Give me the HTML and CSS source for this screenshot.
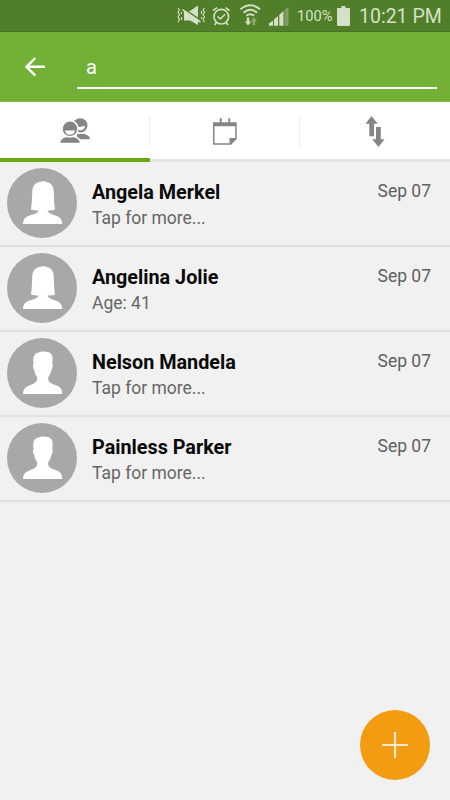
FILE: index.html
```html
<!DOCTYPE html>
<html lang="en">

<head>
    <meta charset="UTF-8">
    <meta name="viewport" content="width=device-width, initial-scale=1.0">
    <title>Contacts</title>
    <link rel="stylesheet" href="styles.css">
</head>

<body>
    <!-- shared avatar shapes -->
    <svg class="symbols" width="0" height="0">
        <symbol id="avatar-woman" viewBox="0 0 70 70">
            <path d="M24 41.500 C25 34 25 29 25.300 23 C25.700 17 29.500 13.500 35 13.500 C36.500 12.800 39 13.300 40 14.200 C44.500 14.800 46.700 18.500 46.800 24 C47 31 47 36 48 41.500 C45.500 42.700 42.500 42.300 40.500 42.500 C41 45.500 46 46.500 50 48 C53.500 49.500 55 52 55.300 56 L16 56 C16.300 51.500 18 49.300 22 47.800 C26 46.400 30.500 45.500 31.500 42.500 C29 42.300 26 42.500 24 41.500Z" />
        </symbol>
        <symbol id="avatar-man" viewBox="0 0 70 70">
            <path d="M30 39 C28.300 36.500 27.600 34.500 27.300 32 C26 30.500 25.500 26.800 26.700 25.800 C25.300 19 27.500 15.300 31 14.700 C35 12.700 41 13.300 43.500 15.300 C46 17.500 46 21.500 45.200 25.800 C46.300 27 45.600 31 44.300 32 C44 34.500 43.200 36.700 41.300 39 C40.500 43 42.500 45 47.500 46.700 C53 48.500 55 50 55.300 56 L16 56 C16.300 50.500 18.500 48.700 23.500 46.900 C29 45 31 43 30 39Z" />
        </symbol>
    </svg>

    <div class="screen">
        <div class="status-bar">
            <svg class="status-icons" width="112" height="31" viewBox="177 0 112 31">
                <!-- mute / vibrate -->
                <path d="M184 11 H190 L198 5.500 V25 L190 20.500 H184Z" />
                <path class="cut" d="M183 8.300 L201 20.300" />
                <path class="line" d="M182.500 9.700 L200.500 22" />
                <path class="wave" d="M178 8 l1.500 2 -1.500 2.300 1.500 2.300 -1.500 2.300 1.500 2.300 -1.500 3 M204.500 8 l-1.500 2 1.500 2.300 -1.500 2.300 1.500 2.300 -1.500 2.300 1.500 3" />
                <path class="wave" d="M181.500 12 v2 M181.500 17 v3 M201.500 11 v3 M201.500 17 v2" />
                <!-- alarm -->
                <circle class="line" cx="221.300" cy="16.700" r="7.300" />
                <path class="line" d="M217.500 16.500 L220.300 19 L225 14.300 M213 10.700 L217 7.700 M229.600 10.700 L225.600 7.700 M216.500 22.500 L214.500 25 M226 22.500 L228 25" />
                <!-- wifi -->
                <path class="line thick" d="M240.500 9.300 Q250.300 1.300 260 9.300 M243.500 12.700 Q250.300 7 257 12.700 M246.300 15.800 Q250.300 12.800 254.200 15.800" />
                <path d="M246.800 17.500 h2.500 v4 h2 l-3.200 4 -3.200 -4 h1.900Z" />
                <path class="dim" d="M252.600 25.300 h2.500 v-4 h2 l-3.200 -4 -3.200 4 h1.900Z" />
                <!-- signal -->
                <path d="M269 25.700 V23.500 L273 20.500 V25.700Z M274 25.700 V19.500 L278 16 V25.700Z M279.300 25.700 V14.800 L283.500 11 V25.700Z" />
                <path class="faint" d="M284.500 25.700 V10 L288.500 6.500 V25.700Z" />
            </svg>
            <span class="battery-text">100%</span>
            <svg class="battery" width="13" height="20" viewBox="0 0 13 20">
                <path d="M4.500 0 H8.500 V2 H12 Q13 2 13 3 V19 Q13 20 12 20 H1 Q0 20 0 19 V3 Q0 2 1 2 H4.500Z" />
            </svg>
            <span class="clock">10:21 PM</span>
        </div>

        <div class="app-bar">
            <svg class="back" width="20" height="20" viewBox="0 0 20 20">
                <path d="M10.300 1 L1.500 9.800 L10.300 18.600 M1.500 9.800 H20" />
            </svg>
            <div class="search">a</div>
        </div>

        <div class="tabs">
            <div class="tab active">
                <svg width="32" height="32" viewBox="59 115 32 32">
                    <circle class="person" cx="80.200" cy="126.400" r="7.200" />
                    <path class="face" d="M76 128 Q81 128 85 126.800 Q84.500 131.300 80 131.500Z" />
                    <path class="person" d="M77 140.300 V135 H84.500 Q89.800 136.500 90 140.300Z" />
                    <path class="person outlined" d="M59.300 144.500 Q59.500 139.500 65.500 137.500 H74.500 Q80.500 139.500 80.700 144.500Z" />
                    <circle class="person outlined" cx="70" cy="129.800" r="8" />
                    <path class="face" d="M65 131.500 H75 Q74.200 135.700 70 135.700 Q65.800 135.700 65 131.500Z" />
                </svg>
            </div>
            <div class="tab">
                <svg width="32" height="32" viewBox="209 115 32 32">
                    <path class="person" d="M213 122.300 H236.700 V139 L231 144.800 H213Z M219.800 118.200 h1.900 v5 h-1.900Z M228.300 118.200 h1.900 v5 h-1.900Z" />
                    <path class="face" d="M214.500 126.300 H235.200 V138 H229.500 V143.300 H214.500Z" />
                </svg>
            </div>
            <div class="tab">
                <svg width="32" height="32" viewBox="359 115 32 32">
                    <path class="person" d="M371.500 116 L377.700 123.700 H374 V136.300 H369.300 V123.700 H365.500Z M378.400 147 L372.300 139.300 H376 V127 H380.800 V139.300 H384.600Z" />
                </svg>
            </div>
        </div>

        <div class="contact-list">
            <div class="contact">
                <svg class="avatar"><use href="#avatar-woman" /></svg>
                <div class="contact-info">
                    <div class="name">Angela Merkel</div>
                    <div class="detail">Tap for more...</div>
                </div>
                <div class="date">Sep 07</div>
            </div>
            <div class="contact">
                <svg class="avatar"><use href="#avatar-woman" /></svg>
                <div class="contact-info">
                    <div class="name">Angelina Jolie</div>
                    <div class="detail">Age: 41</div>
                </div>
                <div class="date">Sep 07</div>
            </div>
            <div class="contact">
                <svg class="avatar"><use href="#avatar-man" /></svg>
                <div class="contact-info">
                    <div class="name">Nelson Mandela</div>
                    <div class="detail">Tap for more...</div>
                </div>
                <div class="date">Sep 07</div>
            </div>
            <div class="contact">
                <svg class="avatar"><use href="#avatar-man" /></svg>
                <div class="contact-info">
                    <div class="name">Painless Parker</div>
                    <div class="detail">Tap for more...</div>
                </div>
                <div class="date">Sep 07</div>
            </div>
        </div>

        <div class="add-button">
            <svg width="26" height="26" viewBox="0 0 26 26">
                <path d="M13 0 V26 M0 13 H26" />
            </svg>
        </div>
    </div>
</body>

</html>
```
FILE: styles.css
```css
* {
    box-sizing: border-box;
}

body {
    margin: 0;
    font-family: Roboto, sans-serif;
    background-color: #f1f1f1;
}

.symbols {
    display: none;
}

.screen {
    position: relative;
    height: 800px;
    overflow: hidden;
}

/* Status bar */
.status-bar {
    height: 32px;
    padding-right: 9px;
    display: flex;
    justify-content: flex-end;
    align-items: center;
    background-color: #517e28;
    border-bottom: 1px solid #487224;
    color: #d5e0c9;
}

.status-icons,
.battery {
    fill: #d5e0c9;
}

.status-icons .line,
.status-icons .wave {
    fill: none;
    stroke: #d5e0c9;
    stroke-width: 1.6;
}

.status-icons .wave {
    stroke-width: 1.1;
}

.status-icons .thick {
    stroke-width: 1.9;
}

.status-icons .cut {
    stroke: #517e28;
    stroke-width: 1.5;
}

.status-icons .dim {
    fill: #8eab74;
}

.status-icons .faint {
    fill: #80a062;
}

.battery-text {
    width: 36px;
    margin-left: 8px;
    padding-top: 1px;
    font-size: 14.7px;
    white-space: nowrap;
}

.battery {
    margin: 0 9px 0 4px;
}

.clock {
    width: 82px;
    padding-top: 1px;
    font-size: 19.5px;
    white-space: nowrap;
}

/* Search bar */
.app-bar {
    height: 70px;
    padding: 0 13px 0 25px;
    display: flex;
    align-items: center;
    background-color: #73b136;
    border-bottom: 1px solid #7fb84a;
}

.back {
    fill: none;
    stroke: #ffffff;
    stroke-width: 2.4;
}

.search {
    flex: 1;
    height: 34px;
    margin: 11px 0 0 32px;
    padding-left: 9px;
    border-bottom: 2px solid #ffffff;
    color: #ffffff;
    font-size: 20px;
    line-height: 24px;
}

/* Tabs */
.tabs {
    height: 60px;
    display: flex;
    background-color: #ffffff;
}

.tab {
    flex: 1;
    display: flex;
    align-items: center;
    justify-content: center;
    border-bottom: 3px solid #e5e5e5;
    background: linear-gradient(#eeeeee, #eeeeee) no-repeat right 14px / 1px 31px;
}

.tab:last-child {
    background: none;
}

.tab.active {
    border-bottom: 4px solid #66aa10;
}

.person {
    fill: #858585;
}

.outlined {
    stroke: #ffffff;
    stroke-width: 1.5;
}

.face {
    fill: #ffffff;
}

/* Contacts */
.contact {
    height: 85px;
    padding: 6px 19px 0 7px;
    display: flex;
    border-bottom: 2px solid #e0e0e0;
}

.avatar {
    width: 70px;
    height: 70px;
    border-radius: 50%;
    background-color: #a8a8a8;
    fill: #ffffff;
}

.contact-info {
    flex: 1;
    margin-left: 15px;
    padding-top: 12px;
}

.name {
    font-size: 19.8px;
    font-weight: bold;
    line-height: 26px;
    color: #0a0a0a;
}

.detail {
    font-size: 17.5px;
    line-height: 24px;
    color: #666666;
}

.date {
    padding-top: 11px;
    font-size: 17.5px;
    line-height: 24px;
    color: #606060;
}

/* Floating button */
.add-button {
    position: absolute;
    right: 20px;
    bottom: 20px;
    width: 70px;
    height: 70px;
    display: flex;
    align-items: center;
    justify-content: center;
    border-radius: 50%;
    background-color: #f39c12;
}

.add-button svg {
    stroke: #fdebd0;
    stroke-width: 2.2;
}
```
